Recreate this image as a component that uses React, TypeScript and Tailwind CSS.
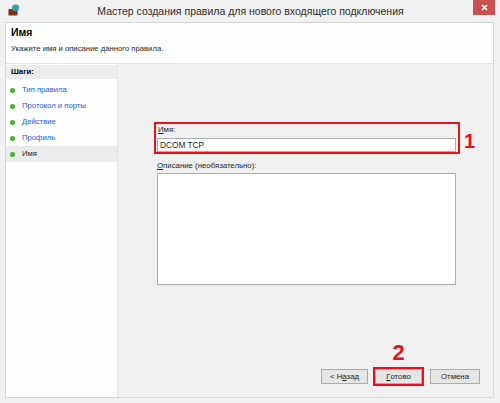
import React from "react";

const steps = ["Тип правила", "Протокол и порты", "Действие", "Профиль", "Имя"];

function FirewallIcon() {
  return (
    <svg width="12" height="12" viewBox="0 0 12 12">
      <rect x="0.5" y="5" width="9" height="6.5" fill="#9c3b2a" />
      <path d="M0.5 7.2H9.5M0.5 9.4H9.5M3 5V7.2M6.5 5V7.2M2 7.2V9.4M5 7.2V9.4M8 7.2V9.4M3.5 9.4V11.5M6.5 9.4V11.5" stroke="#5e1e12" strokeWidth="0.6" />
      <circle cx="7.5" cy="4" r="3.5" fill="#2f8fd8" />
      <path d="M5.5 2.2c1 0.3 1.3 1.4 0.6 2.1-0.6 0.6 0 1.5 0.7 1.9M8.2 0.8c0.6 0.8 1.8 0.8 2.4 1.4-0.8 0.6-1.5 1.6-0.7 2.6" stroke="#5cbf2a" strokeWidth="1.1" fill="none" />
    </svg>
  );
}

export default function App() {
  return (
    <div
      className="w-[500px] h-[403px] bg-[#f1f1f1] flex flex-col overflow-hidden text-[#1e1e1e]"
      style={{ fontFamily: '"Liberation Sans", Arial, sans-serif' }}
    >
      {/* title bar */}
      <div className="relative h-[22px] shrink-0 flex items-center">
        <div className="absolute left-[8px] top-[4px]">
          <FirewallIcon />
        </div>
        <div className="flex-1 text-center text-[10.5px] leading-[22px] text-[#2d2d2d] pl-[1px]">
          Мастер создания правила для нового входящего подключения
        </div>
        <div className="absolute right-[5px] top-0 w-[22px] h-[15px] bg-[#c9504f] flex items-center justify-center">
          <svg width="7" height="7" viewBox="0 0 7 7">
            <path d="M1 1L6 6M6 1L1 6" stroke="#ffffff" strokeWidth="1.6" />
          </svg>
        </div>
      </div>

      {/* inner frame */}
      <div className="ml-[5px] mr-[6px] mb-[5px] flex-1 border border-[#d6d6d6] flex flex-col bg-white">
        {/* header */}
        <div className="h-[40px] shrink-0 bg-[#fdfffd] pl-[5px] flex flex-col">
          <div className="mt-[3px] text-[10.5px] leading-[12px] font-bold text-black">Имя</div>
          <div className="mt-[6px] text-[7.7px] leading-[10px]">Укажите имя и описание данного правила.</div>
        </div>
        <div className="h-px bg-[#e2e2e2] shrink-0" />

        {/* body */}
        <div className="flex-1 flex min-h-0">
          {/* left steps */}
          <div className="w-[112px] shrink-0 bg-[#fdfffd] border-r border-[#e3e3e3] flex flex-col">
            <div className="mt-px h-[14px] bg-[#ececec] flex items-center pl-[5px] text-[7.8px] font-bold text-black">
              Шаги:
            </div>
            <div className="mt-[3px] flex flex-col">
              {steps.map((s, i) => {
                const cur = i === steps.length - 1;
                return (
                  <div
                    key={s}
                    className={
                      "h-[16px] flex items-center pl-[3px] " + (cur ? "bg-[#ececec]" : "")
                    }
                  >
                    <span className="w-[5px] h-[5px] rounded-full bg-[#4caf2c] ml-[1px] mr-[7px]" />
                    <span className={"text-[7.7px] " + (cur ? "text-[#1e1e1e]" : "text-[#1760c8]")}>{s}</span>
                  </div>
                );
              })}
            </div>
          </div>

          {/* right content */}
          <div className="flex-1 bg-[#f0f0f0] flex flex-col pl-[36px] pr-[13px]">
            <div className="mt-[58px] flex items-center">
              <div className="w-[306px] border-2 border-[#e3121b] pl-px pr-[2px] flex flex-col">
                <div className="text-[7.8px] leading-[11px] pl-[1px]">
                  <span className="underline">И</span>мя:
                </div>
                <div className="mt-[3px] h-[14px] bg-white border border-[#acacac] flex items-center pl-[2px] text-[8.3px]">
                  DCOM TCP
                </div>
              </div>
              <div className="ml-[4px] mt-[6px] text-[20px] leading-[20px] font-bold text-[#e3121b]">1</div>
            </div>
            <div className="mt-[6px] pl-[3px] text-[7.8px] leading-[11px]">
              <span className="underline">О</span>писание (необязательно):
            </div>
            <div className="mt-[2px] ml-[3px] w-[299px] h-[112px] bg-white border border-[#acacac]" />

            <div className="flex-1" />

            <div className="flex justify-end items-end pb-[11px]">
              <div className="w-[47px] h-[15px] mb-[2px] bg-[#e5e5e5] border border-[#adadad] flex items-center justify-center text-[7.8px]">
                &lt; Н<span className="underline">а</span>зад
              </div>
              <div className="ml-[5px] flex flex-col items-center">
                <div className="text-[22px] leading-[18px] font-bold text-[#e3121b] mb-[5px]">2</div>
                <div className="border-2 border-[#e3121b]">
                  <div className="w-[47px] h-[15px] bg-[#e5e5e5] border border-[#adadad] flex items-center justify-center text-[7.8px]">
                    <span className="underline">Г</span>отово
                  </div>
                </div>
              </div>
              <div className="ml-[6px] w-[50px] h-[15px] mb-[2px] bg-[#e5e5e5] border border-[#adadad] flex items-center justify-center text-[7.8px]">
                Отмена
              </div>
            </div>
          </div>
        </div>
      </div>
    </div>
  );
}
